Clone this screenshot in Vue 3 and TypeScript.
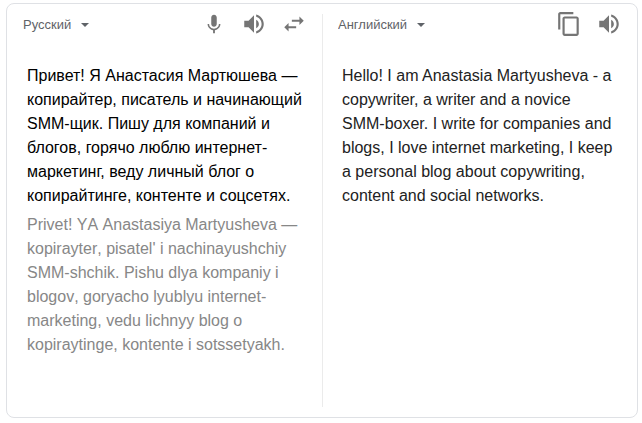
<script setup lang="ts">
import { ref } from 'vue'

const sourceLang = ref('ru')
const targetLang = ref('en')
const languages = [
  { code: 'ru', name: 'Русский' },
  { code: 'en', name: 'Английский' },
]

const source = ref(
  'Привет! Я Анастасия Мартюшева — копирайтер, писатель и начинающий SMM-щик. Пишу для компаний и блогов, горячо люблю интернет-маркетинг, веду личный блог о копирайтинге, контенте и соцсетях.',
)
const transliteration =
  "Privet! YA Anastasiya Martyusheva — kopirayter, pisatel' i nachinayushchiy SMM-shchik. Pishu dlya kompaniy i blogov, goryacho lyublyu internet-marketing, vedu lichnyy blog o kopiraytinge, kontente i sotssetyakh."
const translation =
  'Hello! I am Anastasia Martyusheva - a copywriter, a writer and a novice SMM-boxer. I write for companies and blogs, I love internet marketing, I keep a personal blog about copywriting, content and social networks.'

const speakerPath =
  'M3 9v6h4l5 5V4L7 9H3zm13.5 3c0-1.77-1.02-3.29-2.5-4.03v8.05c1.48-.73 2.5-2.25 2.5-4.02zM14 3.23v2.06c2.89.86 5 3.54 5 6.71s-2.11 5.85-5 6.71v2.06c4.01-.91 7-4.49 7-8.77s-2.99-7.86-7-8.77z'

function swap(): void {
  const previous = sourceLang.value
  sourceLang.value = targetLang.value
  targetLang.value = previous
}
</script>

<template>
  <main class="card">
    <section class="panel">
      <header class="bar">
        <div class="lang">
          <select v-model="sourceLang" aria-label="Исходный язык">
            <option v-for="l in languages" :key="l.code" :value="l.code">{{ l.name }}</option>
          </select>
          <svg class="caret" viewBox="0 0 8 4" aria-hidden="true"><path d="M0 0h8L4 4z" /></svg>
        </div>
        <div class="tools">
          <button type="button" aria-label="Голосовой ввод">
            <svg class="mic" viewBox="0 0 24 24"><path d="M12 15c1.660 0 2.990-1.340 2.990-3L15 5c0-1.660-1.340-3-3-3S9 3.340 9 5v7c0 1.660 1.340 3 3 3zm5.300-3c0 3-2.540 5.100-5.300 5.100S6.700 15 6.700 12H5c0 3.420 2.720 6.230 6 6.720V22h2v-3.280c3.280-.48 6-3.300 6-6.720h-1.700z" /></svg>
          </button>
          <button type="button" aria-label="Прослушать">
            <svg viewBox="0 0 24 24"><path :d="speakerPath" /></svg>
          </button>
          <button type="button" aria-label="Поменять языки местами" @click="swap">
            <svg viewBox="0 0 24 24"><path d="M6.990 11L3 15l3.990 4v-3H14v-2H6.990v-3zM21 9l-3.990-4v3H10v2h7.010v3L21 9z" /></svg>
          </button>
        </div>
      </header>
      <div class="content">
        <textarea v-model="source" class="source" rows="6" aria-label="Исходный текст" spellcheck="false"></textarea>
        <p class="translit">{{ transliteration }}</p>
      </div>
    </section>
    <section class="panel">
      <header class="bar">
        <div class="lang">
          <select v-model="targetLang" aria-label="Язык перевода">
            <option v-for="l in languages" :key="l.code" :value="l.code">{{ l.name }}</option>
          </select>
          <svg class="caret" viewBox="0 0 8 4" aria-hidden="true"><path d="M0 0h8L4 4z" /></svg>
        </div>
        <div class="tools">
          <button type="button" aria-label="Скопировать">
            <svg viewBox="0 0 24 24"><path d="M16 1H4c-1.100 0-2 .9-2 2v14h2V3h12V1zm3 4H8c-1.100 0-2 .9-2 2v14c0 1.100.9 2 2 2h11c1.100 0 2-.9 2-2V7c0-1.100-.9-2-2-2zm0 16H8V7h11v14z" /></svg>
          </button>
          <button type="button" aria-label="Прослушать перевод">
            <svg viewBox="0 0 24 24"><path :d="speakerPath" /></svg>
          </button>
        </div>
      </header>
      <div class="content">
        <p class="translation">{{ translation }}</p>
      </div>
    </section>
  </main>
</template>

<style>
body {
  background: #fff;
}
</style>

<style scoped>
.card {
  display: grid;
  grid-template-columns: 1fr 1fr;
  box-sizing: border-box;
  min-height: calc(100vh - 8px);
  margin: 3px 4px 5px 6px;
  padding: 10px 0;
  border: 1px solid #dfe1e5;
  border-radius: 8px;
  font-family: "Liberation Sans", Arial, sans-serif;
  font-size: 16px;
  line-height: 24px;
  color: #222;
}

.panel + .panel {
  border-left: 1px solid #ebebeb;
}

.bar {
  display: flex;
  align-items: center;
  justify-content: space-between;
  height: 20px;
  padding: 0 8px 0 16px;
}

.panel + .panel .bar {
  padding-left: 15px;
}

.lang {
  display: flex;
  align-items: center;
  gap: 10px;
  padding-top: 2px;
}

.lang select {
  appearance: none;
  field-sizing: content;
  margin: 0;
  padding: 0;
  border: 0;
  background: none;
  font: 13px/20px "Liberation Sans", Arial, sans-serif;
  color: #5f6368;
  cursor: pointer;
}

.caret {
  width: 8px;
  height: 4px;
  fill: #5f6368;
  pointer-events: none;
}

.tools {
  display: flex;
}

.tools button {
  display: flex;
  align-items: center;
  justify-content: center;
  width: 40px;
  height: 40px;
  padding: 0;
  border: 0;
  background: none;
  cursor: pointer;
}

.tools svg {
  width: 26px;
  height: 26px;
  fill: #757575;
}

.tools .mic {
  width: 22px;
  height: 22px;
}

.content {
  padding: 30px 12px 0 20px;
}

.panel + .panel .content {
  padding-right: 22px;
  padding-left: 19px;
}

.source {
  display: block;
  box-sizing: border-box;
  width: 100%;
  margin: 0 0 5px;
  padding: 0;
  border: 0;
  outline: 0;
  overflow: hidden;
  resize: none;
  background: none;
  font: inherit;
  color: #000;
}

.translit,
.translation {
  margin: 0;
}

.translit {
  font-kerning: none;
  color: #878787;
}
</style>
